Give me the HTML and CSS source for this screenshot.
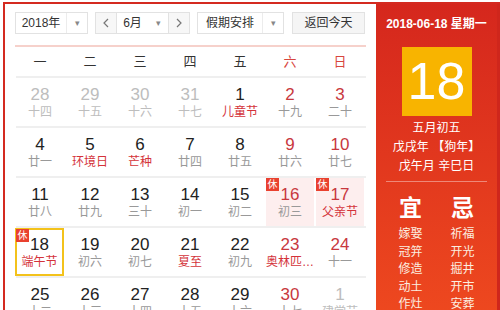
FILE: index.html
```html
<!DOCTYPE html>
<html>
<head>
<meta charset="utf-8">
<title>万年历</title>
<link rel="stylesheet" href="styles.css">
</head>
<body>
<div class="cal">
  <div class="main">
    <div class="bar">
      <div class="sel sel-year"><span class="val">2018年</span><span class="drop">&#9662;</span></div>
      <div class="sel sel-month">
        <span class="nav"><svg width="8" height="10" viewBox="0 0 8 10"><path d="M6 1 2 5l4 4" fill="none" stroke="#777" stroke-width="1.2"/></svg></span>
        <span class="val">6月</span><span class="drop plain">&#9662;</span>
        <span class="nav"><svg width="8" height="10" viewBox="0 0 8 10"><path d="M2 1l4 4-4 4" fill="none" stroke="#777" stroke-width="1.2"/></svg></span>
      </div>
      <div class="sel sel-hol"><span class="val">假期安排</span><span class="drop">&#9662;</span></div>
      <div class="btn">返回今天</div>
    </div>

    <div class="head">
      <span>一</span><span>二</span><span>三</span><span>四</span><span>五</span><span class="we">六</span><span class="we">日</span>
    </div>

    <div class="week">
      <div class="day other"><b>28</b><i>十四</i></div>
      <div class="day other"><b>29</b><i>十五</i></div>
      <div class="day other"><b>30</b><i>十六</i></div>
      <div class="day other"><b>31</b><i>十七</i></div>
      <div class="day"><b>1</b><i class="fest">儿童节</i></div>
      <div class="day we"><b>2</b><i>十九</i></div>
      <div class="day we"><b>3</b><i>二十</i></div>
    </div>
    <div class="week">
      <div class="day"><b>4</b><i>廿一</i></div>
      <div class="day"><b>5</b><i class="fest">环境日</i></div>
      <div class="day"><b>6</b><i class="fest">芒种</i></div>
      <div class="day"><b>7</b><i>廿四</i></div>
      <div class="day"><b>8</b><i>廿五</i></div>
      <div class="day we"><b>9</b><i>廿六</i></div>
      <div class="day we"><b>10</b><i>廿七</i></div>
    </div>
    <div class="week">
      <div class="day"><b>11</b><i>廿八</i></div>
      <div class="day"><b>12</b><i>廿九</i></div>
      <div class="day"><b>13</b><i>三十</i></div>
      <div class="day"><b>14</b><i>初一</i></div>
      <div class="day"><b>15</b><i>初二</i></div>
      <div class="day we rest"><em>休</em><b>16</b><i>初三</i></div>
      <div class="day we rest"><em>休</em><b>17</b><i class="fest">父亲节</i></div>
    </div>
    <div class="week">
      <div class="day today"><em>休</em><b>18</b><i class="fest">端午节</i></div>
      <div class="day"><b>19</b><i>初六</i></div>
      <div class="day"><b>20</b><i>初七</i></div>
      <div class="day"><b>21</b><i class="fest">夏至</i></div>
      <div class="day"><b>22</b><i>初九</i></div>
      <div class="day we"><b>23</b><i class="fest">奥林匹…</i></div>
      <div class="day we"><b>24</b><i>十一</i></div>
    </div>
    <div class="week">
      <div class="day"><b>25</b><i>十二</i></div>
      <div class="day"><b>26</b><i>十三</i></div>
      <div class="day"><b>27</b><i>十四</i></div>
      <div class="day"><b>28</b><i>十五</i></div>
      <div class="day"><b>29</b><i>十六</i></div>
      <div class="day we"><b>30</b><i>十七</i></div>
      <div class="day other"><b>1</b><i>建党节</i></div>
    </div>
  </div>

  <div class="side">
    <div class="side-date">2018-06-18 星期一</div>
    <div class="big">18</div>
    <div class="lunar">
      <p>五月初五</p>
      <p>戊戌年 【狗年】</p>
      <p>戊午月 辛巳日</p>
    </div>
    <div class="yiji">
      <div class="col">
        <h3>宜</h3>
        <p>嫁娶</p><p>冠笄</p><p>修造</p><p>动土</p><p>作灶</p>
      </div>
      <div class="col">
        <h3>忌</h3>
        <p>祈福</p><p>开光</p><p>掘井</p><p>开市</p><p>安葬</p>
      </div>
    </div>
  </div>
</div>
</body>
</html>
```

FILE: styles.css
```css
html, body {
  margin: 0;
  padding: 0;
  background: #fff;
  overflow: hidden;
}

body {
  font-family: "Liberation Sans", "Noto Sans CJK SC", sans-serif;
  font-size: 12px;
  color: #333;
}

.cal {
  display: flex;
  margin: 2px 0 0 3px;
  width: 497px;
  height: 330px;
  border: 2px solid #d42a20;
  border-right: none;
  border-bottom: none;
  box-sizing: border-box;
}

/* ---- left: month grid ---- */

.main {
  width: 371px;
  padding: 8px 0 0 11px;
  box-sizing: border-box;
}

.bar {
  display: flex;
  align-items: center;
  height: 22px;
  margin-left: -1px;
  padding-bottom: 11px;
  border-bottom: 2px solid #f6d1cb;
  width: 351px;
}

.sel, .btn {
  display: flex;
  align-items: stretch;
  height: 22px;
  border: 1px solid #e2e2e2;
  box-sizing: border-box;
  background: #fff;
  line-height: 20px;
  color: #333;
}

.sel .val {
  flex: 1;
  text-align: center;
}

.sel .drop {
  width: 20px;
  text-align: center;
  font-size: 9px;
  color: #888;
  border-left: 1px solid #ececec;
}

.sel .drop.plain {
  border-left: none;
}

.sel-year {
  width: 73px;
}

.sel-month {
  width: 95px;
  margin-left: 7px;
}

.sel-month .nav {
  width: 20px;
  display: flex;
  align-items: center;
  justify-content: center;
  background: #f7f7f7;
}

.sel-month .nav:first-child {
  border-right: 1px solid #e2e2e2;
}

.sel-month .nav:last-child {
  border-left: 1px solid #e2e2e2;
}

.sel-hol {
  width: 87px;
  margin-left: 7px;
}

.btn {
  width: 73px;
  margin-left: 8px;
  justify-content: center;
  background: #f5f5f5;
}

.head {
  display: grid;
  grid-template-columns: repeat(7, 48px);
  column-gap: 2px;
  width: 350px;
  height: 29px;
  line-height: 29px;
  font-size: 13px;
  text-align: center;
  border-bottom: 2px solid #efefef;
}

.head .we {
  color: #d8463e;
}

.week {
  display: grid;
  grid-template-columns: repeat(7, 48px);
  column-gap: 2px;
  width: 350px;
  border-bottom: 2px solid #efefef;
}

.day {
  position: relative;
  height: 48px;
  padding-top: 7px;
  box-sizing: border-box;
  text-align: center;
}

.day b {
  display: block;
  font-weight: normal;
  font-size: 17px;
  line-height: 20px;
  color: #222;
}

.day i {
  display: block;
  font-style: normal;
  font-size: 12px;
  line-height: 15px;
  color: #999;
  white-space: nowrap;
}

.day.we b {
  color: #c8383e;
}

.day i.fest {
  color: #d4333a;
}

.day.other b,
.day.other i {
  color: #bdbdbd;
}

.day.rest {
  background: #fdeeee;
}

.day.today {
  border: 2px solid #f3c21b;
  padding-top: 5px;
  margin-left: -1px;
}

.day em {
  position: absolute;
  left: 0;
  top: 0;
  width: 13px;
  height: 13px;
  background: #e9412f;
  color: #fff;
  font-style: normal;
  font-size: 10px;
  line-height: 13px;
  text-align: center;
}

.day.today em {
  left: -1px;
  top: -1px;
}

/* ---- right: today panel ---- */

.side {
  width: 124px;
  background: linear-gradient(#d5271d, #ef4a1f);
  border-right: 3px solid #cf261c;
  color: #fff;
  text-align: center;
  box-sizing: border-box;
}

.side-date {
  margin-top: 13px;
  font-size: 12px;
  font-weight: bold;
  line-height: 14px;
}

.big {
  width: 70px;
  height: 69px;
  margin: 16px auto 0;
  background: #f8b400;
  font-size: 52px;
  line-height: 69px;
  font-weight: normal;
}

.lunar {
  margin-top: 3px;
}

.lunar p {
  margin: 0;
  line-height: 19px;
}

.yiji {
  display: flex;
  justify-content: center;
  gap: 3px;
  margin: 5px 10px 0;
  padding-top: 11px;
  border-top: 1px solid rgba(255, 255, 255, 0.4);
}

.yiji .col {
  width: 50px;
}

.yiji h3 {
  margin: 0 0 3px;
  font-size: 23px;
  line-height: 30px;
  font-weight: bold;
}

.yiji p {
  margin: 0;
  line-height: 17.5px;
  color: #fbeee0;
}
```
